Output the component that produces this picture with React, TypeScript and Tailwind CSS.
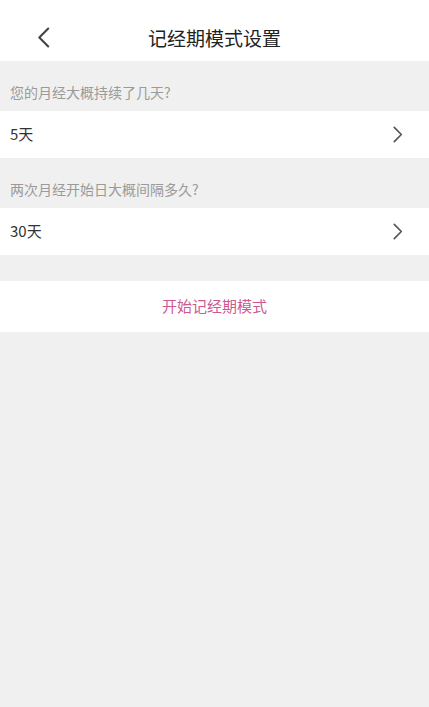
const font = { fontFamily: '"Noto Sans CJK SC", "Noto Sans", sans-serif' };

function Chevron({ dir, className }: { dir: 'left' | 'right'; className?: string }) {
  return (
    <svg viewBox="0 0 12 20" className={className} fill="none" stroke="currentColor" strokeWidth={2} strokeLinecap="round" strokeLinejoin="round">
      {dir === 'left' ? <path d="M10.5 1.5 2 10l8.5 8.5" /> : <path d="M1.5 1.5 10 10l-8.5 8.5" />}
    </svg>
  );
}

const questions = [
  { label: '您的月经大概持续了几天?', value: '5天' },
  { label: '两次月经开始日大概间隔多久?', value: '30天' },
];

export default function App() {
  return (
    <div className="min-h-[707px] w-full bg-[#f0f0f0]" style={font}>
      <header className="relative flex h-[61px] items-center justify-center bg-white pt-[15px]">
        <button className="absolute left-[37px] top-[27px] text-[#444]">
          <Chevron dir="left" className="h-[21px] w-[13px]" />
        </button>
        <h1 className="text-[19px] font-normal text-[#222]">记经期模式设置</h1>
      </header>

      {questions.map((q) => (
        <div key={q.label}>
          <div className="flex h-[50px] items-end pb-[8px] pl-[10px] text-[14px] text-[#9a9a9a]">{q.label}</div>
          <div className="flex h-[47px] items-center justify-between bg-white pl-[10px] pr-[26px]">
            <span className="text-[15px] text-[#333]">{q.value}</span>
            <Chevron dir="right" className="h-[17px] w-[10px] text-[#555]" />
          </div>
        </div>
      ))}

      <div className="mt-[26px] flex h-[51px] items-center justify-center bg-white">
        <span className="text-[15px] text-[#cf5890]">开始记经期模式</span>
      </div>
    </div>
  );
}
